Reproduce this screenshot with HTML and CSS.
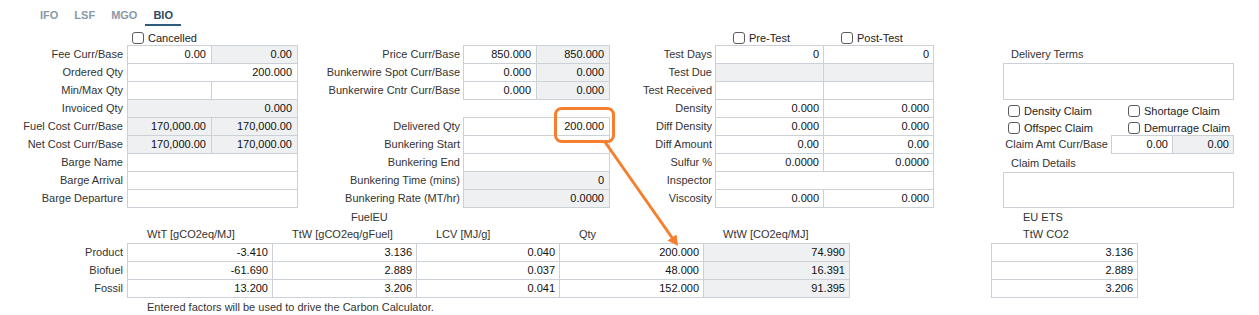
FILE: index.html
```html
<!DOCTYPE html>
<html>
<head>
<meta charset="utf-8">
<link rel="stylesheet" href="styles.css">
</head>
<body>
<div class="page">
  <nav class="tabs">
    <span class="tab">IFO</span>
    <span class="tab">LSF</span>
    <span class="tab">MGO</span>
    <span class="tab active">BIO</span>
  </nav>

  <div class="top">
    <section class="sec sec-left">
      <div class="head head-left">
        <label class="chk"><span class="box"></span>Cancelled</label>
      </div>
      <div class="form form-left">
        <div class="labels">
          <span>Fee Curr/Base</span>
          <span>Ordered Qty</span>
          <span>Min/Max Qty</span>
          <span>Invoiced Qty</span>
          <span>Fuel Cost Curr/Base</span>
          <span>Net Cost Curr/Base</span>
          <span>Barge Name</span>
          <span>Barge Arrival</span>
          <span>Barge Departure</span>
        </div>
        <div class="grid g-left">
          <div class="cell">0.00</div><div class="cell ro">0.00</div>
          <div class="cell span2">200.000</div>
          <div class="cell"></div><div class="cell"></div>
          <div class="cell ro span2">0.000</div>
          <div class="cell ro">170,000.00</div><div class="cell ro">170,000.00</div>
          <div class="cell ro">170,000.00</div><div class="cell ro">170,000.00</div>
          <div class="cell span2"></div>
          <div class="cell span2"></div>
          <div class="cell span2"></div>
        </div>
      </div>
    </section>

    <section class="sec sec-mid">
      <div class="head"></div>
      <div class="form form-mid">
        <div class="labels">
          <span>Price Curr/Base</span>
          <span>Bunkerwire Spot Curr/Base</span>
          <span>Bunkerwire Cntr Curr/Base</span>
        </div>
        <div class="grid g-mid">
          <div class="cell">850.000</div><div class="cell ro">850.000</div>
          <div class="cell">0.000</div><div class="cell ro">0.000</div>
          <div class="cell">0.000</div><div class="cell ro">0.000</div>
        </div>
      </div>
      <div class="form form-mid form-mid2">
        <div class="labels">
          <span>Delivered Qty</span>
          <span>Bunkering Start</span>
          <span>Bunkering End</span>
          <span>Bunkering Time (mins)</span>
          <span>Bunkering Rate (MT/hr)</span>
        </div>
        <div class="grid g-mid">
          <div class="cell span2">200.000</div>
          <div class="cell span2"></div>
          <div class="cell span2"></div>
          <div class="cell ro span2">0</div>
          <div class="cell ro span2">0.0000</div>
        </div>
      </div>
    </section>

    <section class="sec sec-test">
      <div class="head head-test">
        <label class="chk chk-pre"><span class="box"></span>Pre-Test</label>
        <label class="chk"><span class="box"></span>Post-Test</label>
      </div>
      <div class="form form-test">
        <div class="labels">
          <span>Test Days</span>
          <span>Test Due</span>
          <span>Test Received</span>
          <span>Density</span>
          <span>Diff Density</span>
          <span>Diff Amount</span>
          <span>Sulfur %</span>
          <span>Inspector</span>
          <span>Viscosity</span>
        </div>
        <div class="grid g-test">
          <div class="cell">0</div><div class="cell">0</div>
          <div class="cell ro"></div><div class="cell ro"></div>
          <div class="cell"></div><div class="cell"></div>
          <div class="cell">0.000</div><div class="cell">0.000</div>
          <div class="cell">0.000</div><div class="cell">0.000</div>
          <div class="cell">0.00</div><div class="cell">0.00</div>
          <div class="cell">0.0000</div><div class="cell">0.0000</div>
          <div class="cell span2"></div>
          <div class="cell">0.000</div><div class="cell">0.000</div>
        </div>
      </div>
    </section>

    <section class="sec sec-right">
      <div class="head"></div>
      <div class="rlabel">Delivery Terms</div>
      <div class="textarea"></div>
      <div class="chkrow chkrow1">
        <label class="chk chk-col"><span class="box"></span>Density Claim</label>
        <label class="chk"><span class="box"></span>Shortage Claim</label>
      </div>
      <div class="chkrow chkrow2">
        <label class="chk chk-col"><span class="box"></span>Offspec Claim</label>
        <label class="chk"><span class="box"></span>Demurrage Claim</label>
      </div>
      <div class="claim">
        <span class="claim-label">Claim Amt Curr/Base</span>
        <div class="grid g-claim">
          <div class="cell">0.00</div><div class="cell ro">0.00</div>
        </div>
      </div>
      <div class="rlabel">Claim Details</div>
      <div class="textarea textarea2"></div>
    </section>
  </div>

  <div class="bottom">
    <section class="fuel">
      <div class="fuel-title">FuelEU</div>
      <div class="fuel-head">
        <div class="grid-head">
          <span>WtT [gCO2eq/MJ]</span>
          <span>TtW [gCO2eq/gFuel]</span>
          <span>LCV [MJ/g]</span>
          <span>Qty</span>
          <span>WtW [CO2eq/MJ]</span>
        </div>
      </div>
      <div class="form form-fuel">
        <div class="labels">
          <span>Product</span>
          <span>Biofuel</span>
          <span>Fossil</span>
        </div>
        <div class="grid g-fuel">
          <div class="cell">-3.410</div><div class="cell">3.136</div><div class="cell">0.040</div><div class="cell">200.000</div><div class="cell ro">74.990</div>
          <div class="cell">-61.690</div><div class="cell">2.889</div><div class="cell">0.037</div><div class="cell">48.000</div><div class="cell ro">16.391</div>
          <div class="cell">13.200</div><div class="cell">3.206</div><div class="cell">0.041</div><div class="cell">152.000</div><div class="cell ro">91.395</div>
        </div>
      </div>
      <div class="note">Entered factors will be used to drive the Carbon Calculator.</div>
    </section>

    <section class="ets">
      <div class="ets-title">EU ETS</div>
      <div class="ets-sub">TtW CO2</div>
      <div class="grid g-ets">
        <div class="cell">3.136</div>
        <div class="cell">2.889</div>
        <div class="cell">3.206</div>
      </div>
    </section>
  </div>

  <svg class="overlay" width="1259" height="315" viewBox="0 0 1259 315">
    <rect x="555.5" y="108.5" width="58" height="33" rx="6" ry="6" fill="none" stroke="#f57f2f" stroke-width="3"/>
    <line x1="605" y1="142" x2="673" y2="239" stroke="#f57f2f" stroke-width="3"/>
    <polygon points="678,246 667.5,240.5 676.5,234.5" fill="#f57f2f"/>
  </svg>
</div>
</body>
</html>
```

FILE: styles.css
```css
body {
  margin: 0;
  font-family: "Liberation Sans", Arial, sans-serif;
  font-size: 11px;
  color: #333;
  background: #fff;
}

.page {
  position: relative;
  width: 1259px;
  height: 315px;
  overflow: hidden;
}

/* tabs */
.tabs {
  display: flex;
  padding-left: 32px;
  height: 26px;
}
.tab {
  padding: 7px 8px 0;
  height: 17px;
  line-height: 17px;
  font-weight: bold;
  color: #8a99a8;
  border-bottom: 2px solid transparent;
}
.tab.active {
  color: #2c4a60;
  border-bottom-color: #2f5b7a;
}

/* top layout */
.top {
  display: flex;
}
.sec {
  flex: none;
}
.head {
  height: 19px;
  display: flex;
  align-items: flex-end;
}
.head-left {
  padding-left: 132px;
}
.head-test {
  padding-left: 123px;
}

.chk {
  display: flex;
  align-items: center;
  gap: 4px;
  height: 12px;
  margin-bottom: 1px;
  line-height: 12px;
  color: #222;
  white-space: nowrap;
}
.chk-pre {
  width: 108px;
}
.box {
  flex: none;
  width: 12px;
  height: 12px;
  box-sizing: border-box;
  border: 1px solid #5c5c5c;
  border-radius: 3px;
  background: #fff;
}

/* forms */
.form {
  display: flex;
  align-items: flex-start;
}
.labels {
  flex: none;
  display: flex;
  flex-direction: column;
}
.labels span {
  height: 18px;
  line-height: 18px;
  text-align: right;
  white-space: nowrap;
  color: #333;
}

.grid {
  flex: none;
  display: grid;
  gap: 1px;
  padding: 1px;
  background: #ccd0d7;
  grid-auto-rows: 17px;
}
.cell {
  background: #fff;
  text-align: right;
  padding-right: 4px;
  line-height: 17px;
  color: #111;
  white-space: nowrap;
  overflow: hidden;
}
.cell.ro {
  background: #eef0f2;
}
.span2 {
  grid-column: span 2;
}

.sec-left {
  width: 298px;
}
.form-left .labels {
  width: 123px;
  margin-right: 4px;
}
.g-left {
  grid-template-columns: 83px 85px;
}
.g-left .cell {
  padding-right: 5px;
}

.sec-mid {
  width: 312px;
}
.form-mid .labels {
  width: 162px;
  margin-right: 3px;
}
.form-mid2 {
  margin-top: 17px;
}
.g-mid {
  grid-template-columns: 72px 72px;
}
.g-mid .cell {
  padding-right: 5px;
}

.sec-test {
  width: 324px;
}
.form-test .labels {
  width: 102px;
  margin-right: 3px;
}
.g-test {
  grid-template-columns: 107px 109px;
}

/* right column */
.sec-right {
  padding-left: 69px;
  width: 231px;
}
.rlabel {
  height: 18px;
  line-height: 18px;
  padding-left: 8px;
  color: #333;
}
.textarea {
  height: 35px;
  border: 1px solid #ccd0d7;
  background: #fff;
}
.textarea2 {
  height: 34px;
}
.chkrow {
  display: flex;
  align-items: center;
  box-sizing: border-box;
  padding-left: 5px;
  padding-top: 3px;
}
.chkrow .chk {
  margin-bottom: 0;
}
.chkrow1 {
  height: 18px;
}
.chkrow2 {
  height: 17px;
}
.chk-col {
  width: 120px;
}
.claim {
  display: flex;
  align-items: flex-start;
}
.claim-label {
  width: 105px;
  margin-right: 3px;
  text-align: right;
  line-height: 19px;
  white-space: nowrap;
}
.g-claim {
  grid-template-columns: 60px 60px;
}

/* bottom */
.bottom {
  display: flex;
}
.fuel {
  flex: none;
  width: 850px;
}
.fuel-title {
  height: 18px;
  line-height: 18px;
  padding-left: 351px;
}
.fuel-head {
  height: 17px;
  padding-left: 127px;
}
.grid-head {
  display: grid;
  grid-template-columns: 144px 143px 142px 143px 145px;
  column-gap: 1px;
  padding: 0 1px;
  line-height: 17px;
}
.grid-head span {
  padding-left: 19px;
  white-space: nowrap;
}
.form-fuel .labels {
  width: 123px;
  margin-right: 4px;
}
.g-fuel {
  grid-template-columns: 144px 143px 142px 143px 145px;
}
.note {
  height: 18px;
  line-height: 18px;
  padding-left: 147px;
}

.ets {
  flex: none;
  margin-left: 141px;
}
.ets-title {
  height: 18px;
  line-height: 18px;
  padding-left: 32px;
}
.ets-sub {
  height: 17px;
  line-height: 17px;
  padding-left: 32px;
}
.g-ets {
  grid-template-columns: 145px;
}

.overlay {
  position: absolute;
  left: 0;
  top: 0;
  pointer-events: none;
}
```
